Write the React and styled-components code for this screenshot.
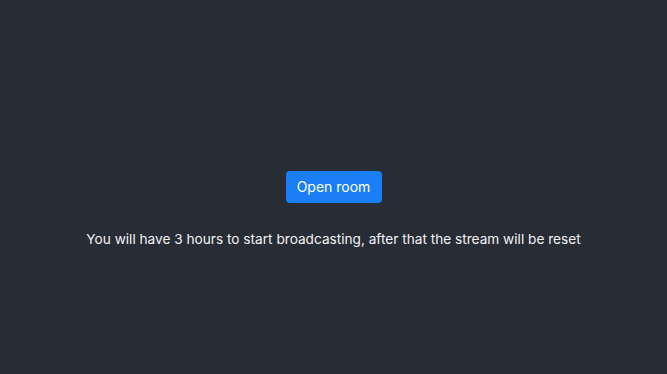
import React from 'react';
import styled, { createGlobalStyle } from 'styled-components';

const GlobalStyle = createGlobalStyle`
  html, body {
    margin: 0;
    padding: 0;
    background: #282c34;
  }
  body {
    font-family: Inter, "Noto Sans", sans-serif;
  }
`;

const Page = styled.main`
  height: 374px;
  display: flex;
  flex-direction: column;
  align-items: center;
  padding-top: 171px;
  box-sizing: border-box;
  color: #f1f2f4;
`;

const Button = styled.button`
  height: 32px;
  width: 96px;
  padding: 0 0 1px;
  border: none;
  border-radius: 4px;
  background: #1a7ff6;
  color: #ffffff;
  font-family: inherit;
  font-size: 14px;
  cursor: pointer;
`;

const Note = styled.p`
  margin: 26px 0 0;
  font-size: 13.65px;
  line-height: 20px;
`;

export default function App() {
  return (
    <>
      <GlobalStyle />
      <Page>
        <Button type="button">Open room</Button>
        <Note>You will have 3 hours to start broadcasting, after that the stream will be reset</Note>
      </Page>
    </>
  );
}
